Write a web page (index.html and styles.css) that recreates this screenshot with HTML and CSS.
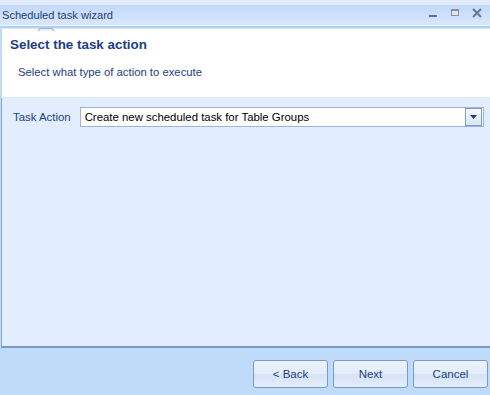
FILE: index.html
```html
<!DOCTYPE html>
<html>
<head>
<meta charset="utf-8">
<title>Scheduled task wizard</title>
<link rel="stylesheet" href="styles.css">
</head>
<body>
<div class="window">
  <div class="titlebar">
    <span class="title">Scheduled task wizard</span>
    <div class="controls">
      <svg class="ctl" width="10" height="10" viewBox="0 0 10 10"><rect x="1" y="7" width="8" height="2" fill="#5f6f8c"/></svg>
      <svg class="ctl" width="10" height="10" viewBox="0 0 10 10"><rect x="1.5" y="1.5" width="7" height="6" fill="#dde6f2" stroke="#8a8f9a"/><rect x="1" y="1" width="8" height="2" fill="#8a8f9a"/></svg>
      <svg class="ctl" width="10" height="10" viewBox="0 0 10 10"><path d="M1 1 L9 9 M9 1 L1 9" stroke="#6a7690" stroke-width="2"/></svg>
    </div>
  </div>
  <div class="titlesep"></div>
  <div class="header">
    <div class="tab"></div>
    <h1 class="heading">Select the task action</h1>
    <p class="subheading">Select what type of action to execute</p>
  </div>
  <div class="content">
    <div class="row">
      <label class="label">Task Action</label>
      <div class="combo">
        <span class="combo-text">Create new scheduled task for Table Groups</span>
        <span class="combo-btn"><svg width="7" height="4" viewBox="0 0 7 4"><path d="M0 0 H7 L3.5 4 Z" fill="#1b3f86"/></svg></span>
      </div>
    </div>
  </div>
  <div class="footer">
    <button class="btn">&lt; Back</button>
    <button class="btn">Next</button>
    <button class="btn">Cancel</button>
  </div>
</div>
</body>
</html>
```
FILE: styles.css
```css
html, body {
  margin: 0;
  padding: 0;
}
body {
  width: 490px;
  height: 395px;
  overflow: hidden;
  font-family: "Liberation Sans", Arial, sans-serif;
  font-size: 11px;
}
.window {
  display: flex;
  flex-direction: column;
  height: 395px;
  background: #bfdbfa;
}
.titlebar {
  height: 20px;
  margin-top: 5px;
  background: linear-gradient(#c3d9fa, #d8e7fb);
  box-shadow: 0 -5px 0 #e3ecfb;
  display: flex;
  align-items: center;
  justify-content: space-between;
}
.title {
  padding-left: 2px;
  font-size: 11.1px;
  color: #1c3b7c;
  margin-top: -1px;
}
.controls {
  display: flex;
  gap: 12px;
  padding-right: 8px;
  margin-top: -4px;
}
.ctl {
  display: block;
}
.titlesep {
  height: 4px;
  background: linear-gradient(#eef4fd 0 1px, #b4cff5 1px 3px, #dbe8fb 3px);
}
.header {
  background: #ffffff;
  height: 69px;
  margin-left: 2px;
  box-sizing: border-box;
  padding: 7px 0 0 8px;
  border-bottom: 1px solid #dfe9f6;
  position: relative;
}
.tab {
  position: absolute;
  left: 36px;
  top: -1px;
  width: 14px;
  height: 2px;
  border: 1px solid #9ab0d0;
  border-bottom: 0;
  border-radius: 3px 3px 0 0;
  background: #e8f0fb;
}
.heading {
  margin: 0;
  font-size: 13.4px;
  font-weight: bold;
  color: #1d3d86;
  line-height: 18px;
}
.subheading {
  margin: 11px 0 0 8px;
  font-size: 11.3px;
  color: #1d3d86;
  line-height: 14px;
}
.content {
  height: 250px;
  background: #e2edfd;
  border-left: 1px solid #8ea9d1;
  border-bottom: 2px solid #7d98c2;
  margin-left: 1px;
  box-sizing: border-box;
  padding: 9px 6px 0 11px;
}
.row {
  display: flex;
  align-items: center;
  gap: 9px;
}
.label {
  color: #1d3d86;
  font-size: 11.4px;
}
.combo {
  flex: 1;
  height: 20px;
  box-sizing: border-box;
  border: 1px solid #9ab5de;
  background: #ffffff;
  display: flex;
  align-items: center;
  justify-content: space-between;
}
.combo-text {
  padding-left: 4px;
  color: #000;
  font-size: 11.4px;
}
.combo-btn {
  width: 15px;
  height: 16px;
  margin-right: 1px;
  border: 1px solid #7f9cc6;
  background: linear-gradient(#f6f9fd, #d9e5f5);
  display: flex;
  align-items: center;
  justify-content: center;
}
.footer {
  flex: 1;
  display: flex;
  justify-content: flex-end;
  align-items: flex-start;
  gap: 5px;
  padding: 12px 2px 0 0;
}
.btn {
  width: 75px;
  height: 28px;
  border: 1px solid #7e97c2;
  border-radius: 3px;
  background: linear-gradient(#ebf3fd 0%, #e2ecfa 50%, #d5e3f6 51%, #e3edfb 100%);
  color: #1d3d86;
  font-family: "Liberation Sans", Arial, sans-serif;
  font-size: 11.5px;
  padding: 0;
}
```
